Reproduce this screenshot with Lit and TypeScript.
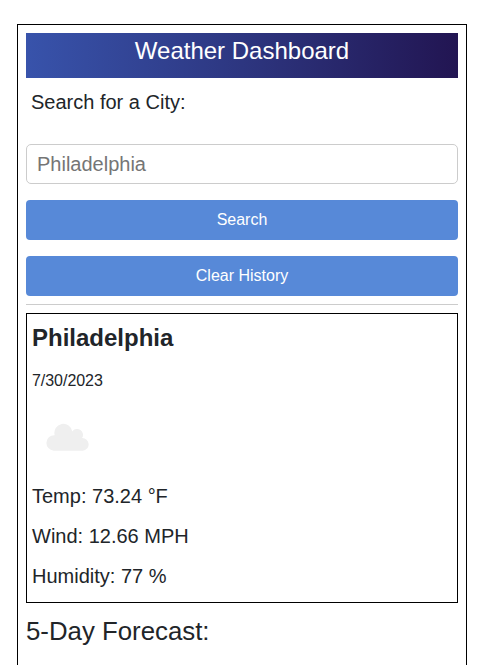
import { LitElement, html, css } from "lit";
import { customElement, property, state } from "lit/decorators.js";

@customElement("weather-card")
class WeatherCard extends LitElement {
  static styles = css`
    :host {
      display: block;
      box-sizing: border-box;
      height: 290px;
      padding: 4px 5px;
      border: 1px solid #000;
    }
    .city {
      margin: 5px 0 0;
      font-size: 24px;
      line-height: 29px;
      font-weight: 700;
    }
    .date {
      margin: 17px 0 0;
      font-size: 16px;
      line-height: 24px;
      letter-spacing: -0.04px;
    }
    .icon {
      display: block;
      width: 43px;
      height: 28px;
      margin: 30px 0 30px 14px;
    }
    .reading {
      margin: 0 0 10px;
      font-size: 20px;
      line-height: 30px;
    }
  `;

  @property() city = "";
  @property() date = "";
  @property({ attribute: false }) readings: string[] = [];

  render() {
    return html`
      <h2 class="city">${this.city}</h2>
      <p class="date">${this.date}</p>
      <svg class="icon" viewBox="0 0 43 28" fill="#efefef" aria-hidden="true">
        <path
          d="M7.700 27.700A7.750 7.750 0 0 1 8.700 12.200A9 9 0 1 1 26.300 8.600A5.700 5.700 0 0 1 36 15.100A6.300 6.300 0 0 1 36.700 27.700Z"
        />
      </svg>
      ${this.readings.map((r) => html`<p class="reading">${r}</p>`)}
    `;
  }
}

@customElement("app-root")
class AppRoot extends LitElement {
  static styles = css`
    :host {
      display: block;
      box-sizing: border-box;
      height: 665px;
      overflow: hidden;
      padding: 24px 15px 0 17px;
      background: #fff;
      color: #212529;
      font-family: "Liberation Sans", Arial, Helvetica, sans-serif;
    }
    .frame {
      box-sizing: border-box;
      height: 720px;
      padding: 8px;
      border: 1px solid #000;
    }
    .title {
      box-sizing: border-box;
      height: 45px;
      margin: 0;
      padding-top: 3px;
      background: linear-gradient(to right, #3853ab, #2d3680 50%, #221552);
      color: #fff;
      font-size: 24px;
      line-height: 29px;
      font-weight: 400;
      text-align: center;
    }
    .search {
      display: flex;
      flex-direction: column;
      gap: 16px;
      padding-bottom: 8px;
      border-bottom: 1px solid #ccc;
    }
    .label {
      margin: 10px 0 11px 5px;
      font-size: 20px;
      line-height: 29px;
    }
    .field {
      box-sizing: border-box;
      width: 100%;
      height: 40px;
      margin: 0;
      padding: 0 10px;
      border: 1px solid #ccc;
      border-radius: 5px;
      background: #fff;
      font: 20px/38px "Liberation Sans", Arial, sans-serif;
    }
    .field::placeholder {
      color: #757575;
    }
    .button {
      height: 40px;
      padding: 0;
      border: 0;
      border-radius: 4px;
      background: #5789d8;
      color: #fff;
      font: 16px/38px "Liberation Sans", Arial, sans-serif;
    }
    weather-card {
      margin-top: 8px;
    }
    .forecast {
      margin: 12px 0 0;
      font-size: 25.8px;
      line-height: 32px;
      font-weight: 400;
    }
  `;

  @state() private readings = ["Temp: 73.24 °F", "Wind: 12.66 MPH", "Humidity: 77 %"];

  render() {
    return html`
      <main class="frame">
        <h1 class="title">Weather Dashboard</h1>
        <section class="search">
          <label class="label" for="city">Search for a City:</label>
          <input class="field" id="city" placeholder="Philadelphia" />
          <button class="button">Search</button>
          <button class="button">Clear History</button>
        </section>
        <weather-card city="Philadelphia" date="7/30/2023" .readings=${this.readings}></weather-card>
        <h3 class="forecast">5-Day Forecast:</h3>
      </main>
    `;
  }
}
